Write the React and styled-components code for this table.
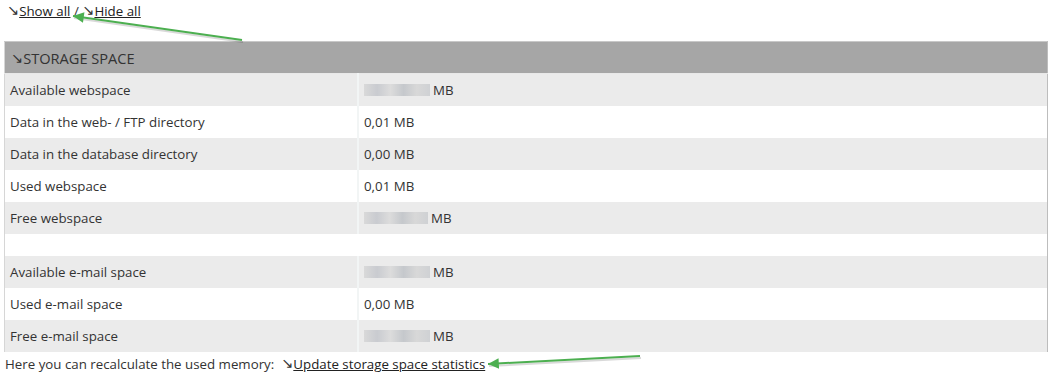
import React from "react";
import styled, { createGlobalStyle } from "styled-components";

const GlobalStyle = createGlobalStyle`
    body{
        margin: 0;
        background: #fff;
        font-family: "Open Sans", "Liberation Sans", sans-serif;
        font-size: 13.3px;
        color: #333;
    }
`;

const Page = styled.div`
    position: relative;
    padding: 2px 3px 0 4px;
    width: 1045px;
`;

const TopLinks = styled.div`
    height: 20px;
    line-height: 18px;
    padding-left: 3px;
    margin-bottom: 19px;
`;

const Link = styled.a`
    color: #222;
    text-decoration: underline;
    cursor: pointer;
`;

const Glyph = styled.span`
    font-family: "DejaVu Sans", sans-serif;
    font-size: 14.5px;
    line-height: 1;
    vertical-align: 1px;
`;

const Storage = styled.table`
    width: 1044px;
    border-collapse: collapse;
    border-left: 1px solid #d6d6d6;
    border-right: 1px solid #bdbdbd;
    border-top: 1px solid #c8c8c8;
`;

const HeaderCell = styled.th`
    background: #a6a6a6;
    text-align: left;
    font-weight: normal;
    font-size: 14.6px;
    height: 31px;
    padding: 0 6px;
    color: #333;
    border-bottom: 1px solid #e8e8e8;
`;

const Row = styled.tr`
    background: ${p => (p.$shaded ? "#ebebeb" : "#fff")};
`;

const Label = styled.td`
    width: 347px;
    height: 32px;
    padding: 0 0 0 5px;
    border-right: 2px solid #f2f5f5;
`;

const Value = styled.td`
    padding: 0 0 0 5px;
`;

const Blur = styled.span`
    display: inline-block;
    width: ${p => p.$w}px;
    height: 12px;
    vertical-align: -1px;
    background: linear-gradient(90deg, #d9d9d9, #c9cbd0 20%, #dcdcdc 40%, #c5c8cc 60%, #d8d8d8 80%, #cfd1d4);
    filter: blur(0.6px);
    margin-right: 3px;
`;

const Spacer = styled.tr`
    background: #fff;
    td{ height: 22px; padding: 0; }
`;

const Footer = styled.div`
    padding-left: 1px;
    line-height: 24px;
`;

const Overlay = styled.svg`
    position: absolute;
    left: 0;
    top: 0;
    pointer-events: none;
`;

const rows = [
    ["Available webspace", null, 66],
    ["Data in the web- / FTP directory", "0,01 MB"],
    ["Data in the database directory", "0,00 MB"],
    ["Used webspace", "0,01 MB"],
    ["Free webspace", null, 64],
];

const mailRows = [
    ["Available e-mail space", null, 66],
    ["Used e-mail space", "0,00 MB"],
    ["Free e-mail space", null, 66],
];

const renderRow = ([label, value, blur], i) => (
    <Row key={label} $shaded={i % 2 === 0}>
        <Label>{label}</Label>
        <Value>{value ? value : <><Blur $w={blur} />MB</>}</Value>
    </Row>
);

const Arrow = ({ x1, y1, x2, y2 }) => {
    const a = Math.atan2(y2 - y1, x2 - x1);
    const l = 12, w = 0.45;
    const p1 = [x2 - l * Math.cos(a - w), y2 - l * Math.sin(a - w)];
    const p2 = [x2 - l * Math.cos(a + w), y2 - l * Math.sin(a + w)];
    return (
        <g>
            <line x1={x1 + 1} y1={y1 + 2} x2={x2 + 1} y2={y2 + 2} stroke="rgba(0,0,0,0.15)" strokeWidth="2" />
            <line x1={x1} y1={y1} x2={x2} y2={y2} stroke="#4caf50" strokeWidth="2" />
            <polygon points={`${x2},${y2} ${p1[0]},${p1[1]} ${p2[0]},${p2[1]}`} fill="#4caf50" />
        </g>
    );
};

const App = () => (
    <>
        <GlobalStyle />
        <Page>
            <TopLinks>
                <Glyph>↘</Glyph><Link>Show all</Link> / <Glyph>↘</Glyph><Link>Hide all</Link>
            </TopLinks>
            <Storage>
                <thead>
                    <tr><HeaderCell colSpan={2}><Glyph>↘</Glyph>STORAGE SPACE</HeaderCell></tr>
                </thead>
                <tbody>
                    {rows.map(renderRow)}
                    <Spacer><td colSpan={2}></td></Spacer>
                    {mailRows.map(renderRow)}
                </tbody>
            </Storage>
            <Footer>
                Here you can recalculate the used memory:&nbsp; <Glyph>↘</Glyph><Link>Update storage space statistics</Link>
            </Footer>
            <Overlay width="1051" height="386">
                <Arrow x1={242} y1={40} x2={73} y2={16} />
                <Arrow x1={640} y1={356} x2={488} y2={364} />
            </Overlay>
        </Page>
    </>
);

export default App;
